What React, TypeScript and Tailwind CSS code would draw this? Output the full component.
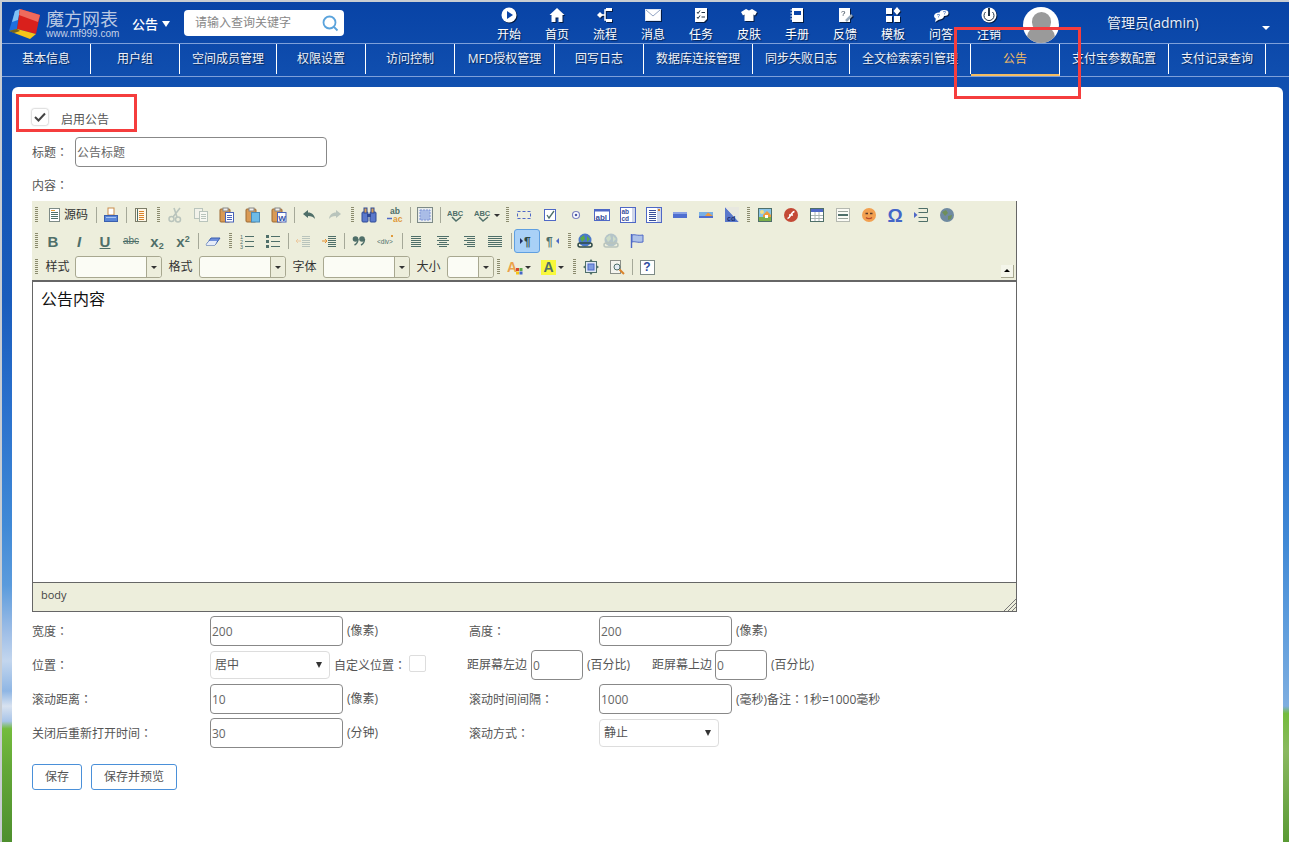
import type { ReactNode } from "react";

const slate = "#4f6f69";
const blue = "#4f68c6";
const faded = "#b9c4bc";

const navItems = [
  { label: "基本信息", w: "w-[89px]" },
  { label: "用户组", w: "w-[89px]" },
  { label: "空间成员管理", w: "w-[97px]" },
  { label: "权限设置", w: "w-[89px]" },
  { label: "访问控制", w: "w-[89px]" },
  { label: "MFD授权管理", w: "w-[100px]" },
  { label: "回写日志", w: "w-[89px]" },
  { label: "数据库连接管理", w: "w-[109px]" },
  { label: "同步失败日志", w: "w-[97px]" },
  { label: "全文检索索引管理", w: "w-[121px]" },
  { label: "公告", w: "w-[89px]", active: true },
  { label: "支付宝参数配置", w: "w-[109px]" },
  { label: "支付记录查询", w: "w-[97px]" },
];

function Ico({ children, w = 16 }: { children: ReactNode; w?: number }) {
  return (
    <svg width={w} height={16} viewBox={`0 0 ${w} 16`} fontFamily="Liberation Sans, sans-serif">
      {children}
    </svg>
  );
}

function Logo() {
  return (
    <svg width={33} height={32} viewBox="0 0 33 32" className="ml-[6px] mt-[6px] shrink-0">
      <polygon points="1,23 7,3 12,1 9,21" fill="#1d6fe0" />
      <polygon points="7,3 12,1 10,12 4,14" fill="#7fc0f5" />
      <polygon points="12,1 32,7 28,26 9,21" fill="#d9201c" />
      <polygon points="12,1 32,7 30,14 11,7" fill="#ee6a5c" />
      <polygon points="1,23 9,21 28,26 22,31" fill="#f5c518" />
      <polygon points="1,23 9,21 12,23 6,25" fill="#222" opacity="0.6" />
    </svg>
  );
}

// the reference's full-width colon sits mid-box, as in the TC font
function Colon() {
  return <span className="[font-family:'Noto_Sans_CJK_TC',sans-serif]">：</span>;
}

/* 顶部白色图标 */
const topIcons: Record<string, ReactNode> = {
  开始: (
    <>
      <circle cx="8" cy="8" r="7.5" fill="#fff" />
      <polygon points="6,4 12,8 6,12" fill="#0a45a8" />
    </>
  ),
  首页: <path d="M8 1 L15.5 8 H13.5 V15 H9.5 V10.5 H6.5 V15 H2.5 V8 H.5 Z" fill="#fff" />,
  流程: (
    <>
      <polygon points="0,8 3,5 6,8 3,11" fill="#fff" />
      <rect x="9" y="1" width="6" height="3" fill="#fff" />
      <rect x="9" y="12" width="6" height="3" fill="#fff" />
      <path d="M10 3 H8 V13 H10 M4 8 H8" stroke="#fff" strokeWidth="1.5" fill="none" />
    </>
  ),
  消息: (
    <>
      <rect x=".5" y="2.5" width="15" height="11" fill="#fff" stroke="#dfe6f2" />
      <path d="M1 3 L8 9 L15 3" stroke="#93a5c4" fill="none" />
    </>
  ),
  任务: (
    <>
      <path d="M2 1 H14 V12 L11 15 H2 Z" fill="#fff" />
      <path d="M4 5 L5 6.5 L7 3.5 M4 10 L5 11.5 L7 8.5" stroke="#234" fill="none" />
      <path d="M8.5 5.5 H12 M8.5 10 H12" stroke="#234" />
    </>
  ),
  皮肤: <path d="M5 2 L8 3.5 L11 2 L16 5 L14 8.5 L12.5 7.5 V14 H3.5 V7.5 L2 8.5 L0 5 Z" fill="#fff" />,
  手册: (
    <>
      <rect x="3" y="1" width="11" height="14" fill="#fff" />
      <rect x="5" y="4" width="7" height="4" fill="#0a45a8" />
      <path d="M3 3 H1.5 M3 6 H1.5 M3 9 H1.5 M3 12 H1.5" stroke="#fff" />
    </>
  ),
  反馈: (
    <>
      <rect x="2" y="1" width="11" height="14" fill="#fff" />
      <text x="4" y="9" fontSize="8" fill="#234">?</text>
      <path d="M9 14 L15 8" stroke="#9ab" strokeWidth="2.5" />
    </>
  ),
  模板: (
    <>
      <rect x="1" y="1" width="6" height="6" fill="#fff" />
      <rect x="1" y="9" width="6" height="6" fill="#fff" />
      <rect x="9" y="9" width="6" height="6" fill="#fff" />
      <polygon points="12,0 15.5,4 12,8 8.5,4" fill="#fff" />
    </>
  ),
  问答: (
    <>
      <ellipse cx="6" cy="9" rx="5" ry="3.5" fill="#fff" />
      <ellipse cx="11" cy="6" rx="4.5" ry="3" fill="#fff" />
      <polygon points="3,11 2,15 7,12" fill="#fff" />
      <text x="4" y="11" fontSize="5" fill="#0a45a8">?</text>
      <text x="10" y="8" fontSize="5" fill="#0a45a8">?</text>
    </>
  ),
  注销: (
    <>
      <circle cx="8" cy="8" r="7.5" fill="#fff" />
      <rect x="7" y="1" width="2" height="8" fill="#234" />
      <path d="M4.5 5 A5 5 0 1 0 11.5 5" stroke="#234" fill="none" />
    </>
  ),
};

function Grip({ w = "w-[8px]" }: { w?: string }) {
  return (
    <div className={`${w} h-[16px] flex justify-center shrink-0`}>
      <div className="w-[3px] h-[16px] bg-[repeating-linear-gradient(#8b8b6e_0_1px,transparent_1px_2px)]" />
    </div>
  );
}

function Sep({ w = "w-[4px]" }: { w?: string }) {
  return (
    <div className={`${w} h-[16px] flex justify-center shrink-0`}>
      <div className="w-[1px] h-[16px] bg-[#a5a898]" />
    </div>
  );
}

function Btn({ children, w = "w-[26px]" }: { children: ReactNode; w?: string }) {
  return <div className={`${w} h-[24px] flex items-center justify-center shrink-0`}>{children}</div>;
}

function Lines({ ys, x1 = 2, x2 = 14, c = slate }: { ys: number[]; x1?: number; x2?: number; c?: string }) {
  return (
    <>
      {ys.map((y) => (
        <path key={y} d={`M${x1} ${y}.5 H${x2}`} stroke={c} />
      ))}
    </>
  );
}

function Clip({ children }: { children: ReactNode }) {
  return (
    <Ico>
      <rect x="1" y="2" width="10" height="13" rx="1" fill="#d99a55" stroke="#9c6a35" />
      <rect x="4" y="1" width="5" height="3" fill="#eee" stroke="#888" />
      {children}
    </Ico>
  );
}

function Combo({ w }: { w: string }) {
  return (
    <div className={`${w} h-[22px] border border-[#a8a890] rounded-[3px] bg-[#fbfcf5] flex justify-end shrink-0`}>
      <div className="w-[15px] border-l border-[#a8a890] bg-[#edeedc] rounded-r-[3px] flex items-center justify-center">
        <div className="w-0 h-0 border-x-[3px] border-x-transparent border-t-[3px] border-t-[#333]" />
      </div>
    </div>
  );
}

function Caret() {
  return <div className="w-0 h-0 border-x-[3px] border-x-transparent border-t-[3px] border-t-[#333] ml-[2px]" />;
}

function Spell() {
  return (
    <Ico w={18}>
      <text x="0" y="9" fontSize="7.5" fontWeight="bold" fill={slate}>ABC</text>
      <path d="M5 10 L9 14 L14 10" stroke={slate} strokeWidth="1.5" fill="none" />
    </Ico>
  );
}

function ToolbarRow1() {
  return (
    <div className="flex items-center h-[26px]">
      <Grip />
      <Btn w="w-[54px]">
        <Ico>
          <rect x="3.5" y="1.5" width="10" height="13" fill="#fff" stroke="#7d8a86" />
          <Lines ys={[5, 7, 9, 11]} x1={5} x2={12} />
          <path d="M5 3.5 H9" stroke="#e09a3a" />
        </Ico>
        <span className="ml-[2px] text-[12px] text-[#333]">源码</span>
      </Btn>
      <Sep />
      <Btn>
        <Ico>
          <rect x="5" y="1" width="6" height="7" fill="#fff" stroke="#c98b4a" />
          <rect x="1.5" y="8.5" width="13" height="6" fill="#5a86d8" stroke="#3a5fae" />
          <path d="M3 10.5 H13" stroke="#a9c4f0" />
        </Ico>
      </Btn>
      <Sep />
      <Btn>
        <Ico>
          <rect x="2.5" y="1.5" width="11" height="13" fill="#fff8e8" stroke="#7d7d68" />
          <Lines ys={[4, 6, 8, 10, 12]} x1={6} x2={11} c="#d9822b" />
          <path d="M4.5 2 V14" stroke={slate} />
        </Ico>
      </Btn>
      <Grip />
      <Btn>
        <Ico>
          <path d="M13 1 L6 10 M7 1 L10 10" stroke={faded} strokeWidth="1.6" />
          <circle cx="4.5" cy="12" r="2.5" fill="none" stroke={faded} strokeWidth="1.5" />
          <circle cx="11" cy="12.5" r="2.5" fill="none" stroke={faded} strokeWidth="1.5" />
        </Ico>
      </Btn>
      <Btn>
        <Ico>
          <rect x="1.5" y="1.5" width="8" height="10" fill="#f2f2ea" stroke={faded} />
          <rect x="6.5" y="4.5" width="8" height="10" fill="#f8f8f2" stroke={faded} />
          <Lines ys={[7, 9, 11]} x1={8} x2={13} c={faded} />
        </Ico>
      </Btn>
      <Btn>
        <Clip>
          <rect x="6.5" y="5.5" width="8" height="9.5" fill="#fff" stroke="#4a63b8" />
          <Lines ys={[8, 10, 12]} x1={8} x2={13} c="#4a63b8" />
        </Clip>
      </Btn>
      <Btn>
        <Clip>
          <rect x="6.5" y="5.5" width="8" height="9.5" fill="#6dbbe8" stroke="#4a8ab8" />
        </Clip>
      </Btn>
      <Btn>
        <Clip>
          <rect x="6.5" y="5.5" width="8.5" height="9.5" fill="#fff" stroke="#4a63b8" />
          <text x="7.3" y="13.5" fontSize="8" fontWeight="bold" fill="#3350a8">W</text>
        </Clip>
      </Btn>
      <Sep />
      <Btn>
        <Ico>
          <path d="M2 7 L7 3 V5.5 C11 5.5 13.5 8 14 12 C12.5 10 10.5 9 7 9 V11 Z" fill={slate} />
        </Ico>
      </Btn>
      <Btn>
        <Ico>
          <path d="M14 7 L9 3 V5.5 C5 5.5 2.5 8 2 12 C3.5 10 5.5 9 9 9 V11 Z" fill={faded} />
        </Ico>
      </Btn>
      <Grip />
      <Btn>
        <Ico>
          <rect x="1" y="5" width="6" height="10" rx="1" fill="#5a78cc" stroke="#2f4a96" />
          <rect x="9" y="5" width="6" height="10" rx="1" fill="#5a78cc" stroke="#2f4a96" />
          <rect x="3" y="1" width="3" height="5" fill="#d9a15a" stroke="#2f4a96" />
          <rect x="10" y="1" width="3" height="5" fill="#d9a15a" stroke="#2f4a96" />
          <rect x="6" y="7" width="4" height="3" fill="#2f4a96" />
        </Ico>
      </Btn>
      <Btn>
        <Ico>
          <text x="3" y="7" fontSize="8.5" fontWeight="bold" fill={slate}>ab</text>
          <text x="6" y="15" fontSize="8.5" fontWeight="bold" fill="#e09a3a">ac</text>
          <path d="M0 11.5 H5" stroke={blue} strokeWidth="1.5" />
        </Ico>
      </Btn>
      <Sep />
      <Btn>
        <Ico>
          <rect x=".5" y=".5" width="15" height="15" fill="#e8ecec" stroke="#7d8a86" />
          <rect x="3" y="3" width="10" height="10" fill="#a9bce6" stroke="#7f94d6" strokeDasharray="2 1" />
        </Ico>
      </Btn>
      <Sep />
      <Btn w="w-[28px]">
        <Spell />
      </Btn>
      <Btn w="w-[33px]">
        <Spell />
        <Caret />
      </Btn>
      <Grip />
      <Btn>
        <Ico>
          <rect x="1.5" y="4.5" width="13" height="7" fill="none" stroke={blue} strokeDasharray="3 2" />
        </Ico>
      </Btn>
      <Btn>
        <Ico>
          <rect x="2.5" y="2.5" width="11" height="11" fill="#fff" stroke={blue} />
          <path d="M5 8 L7 11 L12 4" stroke={slate} strokeWidth="1.3" fill="none" />
        </Ico>
      </Btn>
      <Btn>
        <Ico>
          <circle cx="8" cy="8" r="3.5" fill="#fff" stroke="#7d82c0" strokeWidth="1.2" />
          <circle cx="8" cy="8" r="1.3" fill="#4b5aa8" />
        </Ico>
      </Btn>
      <Btn>
        <Ico>
          <rect x=".5" y="2.5" width="15" height="11" fill="#fff" stroke={blue} />
          <rect x=".5" y="2.5" width="15" height="2" fill={blue} />
          <text x="1.5" y="12.5" fontSize="8" fontWeight="bold" fill="#3a4f9a">abl</text>
        </Ico>
      </Btn>
      <Btn>
        <Ico>
          <rect x=".5" y=".5" width="15" height="15" fill="#fff" stroke={blue} />
          <text x="1.5" y="7" fontSize="6.5" fontWeight="bold" fill="#3a4f9a">ab</text>
          <text x="1.5" y="14" fontSize="6.5" fontWeight="bold" fill="#3a4f9a">cd</text>
          <rect x="12" y="1" width="3" height="14" fill="#cfd6ea" />
        </Ico>
      </Btn>
      <Btn>
        <Ico>
          <rect x=".5" y=".5" width="15" height="15" fill="#fff" stroke={blue} />
          <Lines ys={[3, 5, 7, 9, 11, 13]} x1={3} x2={10} c="#3a4f9a" />
          <rect x="11" y="1" width="4" height="14" fill="#cfd6ea" />
          <rect x="12" y="2" width="2" height="2" fill="#d9822b" />
        </Ico>
      </Btn>
      <Btn>
        <Ico>
          <rect x="1" y="5" width="14" height="6" fill="#4f6fd0" />
          <rect x="1" y="5" width="14" height="2" fill="#8aa2e4" />
        </Ico>
      </Btn>
      <Btn>
        <Ico>
          <rect x="1" y="5" width="14" height="6" fill="#7ab0e4" />
          <path d="M7 9 L10 5.5 L15 9 V11 H7 Z" fill="#ee9b3e" />
          <rect x="1" y="9" width="14" height="2" fill="#4f6fd0" />
        </Ico>
      </Btn>
      <Btn>
        <Ico>
          <polygon points="1,0 15,15 1,15" fill="#5a78cc" />
          <polygon points="1,0 15,0 15,15" fill="#e8e8e0" />
          <text x="3" y="14" fontSize="7" fontWeight="bold" fill="#1c2f70">cd</text>
        </Ico>
      </Btn>
      <Grip w="w-[7px]" />
      <Btn>
        <Ico>
          <rect x="1.5" y="1.5" width="13" height="13" fill="#8ac4e8" stroke={slate} />
          <circle cx="5" cy="5" r="2" fill="#f3e08a" />
          <path d="M6 8 L10 4 L14 8 V10 H6 Z" fill="#ee9b3e" />
          <rect x="2" y="10" width="12" height="4" fill="#7cb04a" />
          <rect x="8" y="8" width="3" height="3" fill="#fff" />
        </Ico>
      </Btn>
      <Btn>
        <Ico>
          <circle cx="8" cy="8" r="7" fill="#c44a36" />
          <path d="M4.5 11.5 C8 11 7.5 5 11.5 4.5 M6 8 H10" stroke="#fff" strokeWidth="1.5" fill="none" />
        </Ico>
      </Btn>
      <Btn>
        <Ico>
          <rect x="1.5" y="1.5" width="13" height="13" fill="#fff" stroke={slate} />
          <rect x="2" y="2" width="12" height="3" fill={blue} />
          <path d="M2 8.5 H14 M2 11.5 H14 M6 5 V14 M10 5 V14" stroke="#aab4b4" />
        </Ico>
      </Btn>
      <Btn>
        <Ico>
          <rect x="1.5" y="1.5" width="13" height="13" fill="#fbfbf5" stroke="#b4b8b0" />
          <rect x="3" y="7" width="10" height="2" fill={slate} />
          <path d="M3 4.5 H13 M3 11.5 H13" stroke="#9aa49c" />
        </Ico>
      </Btn>
      <Btn>
        <Ico>
          <circle cx="8" cy="8" r="7" fill="#f2a050" />
          <path d="M4.5 6.5 H7 M9 6.5 H11.5" stroke="#5a3a2a" strokeWidth="1.3" />
          <path d="M5 10.5 C6.5 12 9.5 12 11 10.5" stroke="#b84a2a" strokeWidth="1.3" fill="none" />
        </Ico>
      </Btn>
      <Btn>
        <span className="text-[19px] leading-none font-bold text-[#4466c8] [font-family:'Liberation_Sans',sans-serif]">Ω</span>
      </Btn>
      <Btn>
        <Ico>
          <path d="M5.5 1.5 H14.5 V5.5 H5.5 M5.5 10.5 H14.5 V14.5 H5.5" fill="none" stroke={slate} />
          <polygon points="1,5 4.5,8 1,11" fill={blue} />
        </Ico>
      </Btn>
      <Btn>
        <Ico>
          <circle cx="8" cy="8" r="7" fill="#6f8aa0" />
          <path d="M3 5 L7 3 L9 6 L6 9 Z M9 9 L13 8 L12 12 L9 13 Z" fill="#6f8f5a" />
        </Ico>
      </Btn>
    </div>
  );
}

function ToolbarRow2() {
  const letter = "text-[15px] leading-none text-[#4f6f69] [font-family:'Liberation_Sans',sans-serif]";
  return (
    <div className="flex items-center h-[26px]">
      <Grip />
      <Btn>
        <span className={`${letter} font-bold`}>B</span>
      </Btn>
      <Btn>
        <span className={`${letter} font-bold italic`}>I</span>
      </Btn>
      <Btn>
        <span className={`${letter} font-bold underline`}>U</span>
      </Btn>
      <Btn>
        <span className="text-[10px] leading-none text-[#4f6f69] line-through [font-family:'Liberation_Sans',sans-serif]">abc</span>
      </Btn>
      <Btn>
        <span className={`${letter} font-bold`}>
          x<sub className="text-[9px]">2</sub>
        </span>
      </Btn>
      <Btn>
        <span className={`${letter} font-bold`}>
          x<sup className="text-[9px]">2</sup>
        </span>
      </Btn>
      <Sep />
      <Btn>
        <Ico>
          <polygon points="1,12 6,5 15,5 10,12" fill="#6f8fdc" stroke="#3a5fae" />
          <polygon points="1,12 4,8 12,8 10,12" fill="#e6ecf8" />
        </Ico>
      </Btn>
      <Grip />
      <Btn>
        <Ico>
          <text x="1" y="6" fontSize="5.5" fill={slate}>1</text>
          <text x="1" y="11" fontSize="5.5" fill={slate}>2</text>
          <text x="1" y="16" fontSize="5.5" fill={slate}>3</text>
          <Lines ys={[3, 8, 13]} x1={6} x2={15} />
        </Ico>
      </Btn>
      <Btn>
        <Ico>
          <rect x="1" y="2" width="3" height="3" fill={slate} />
          <rect x="1" y="7" width="3" height="3" fill={slate} />
          <rect x="1" y="12" width="3" height="3" fill={slate} />
          <Lines ys={[3, 8, 13]} x1={6} x2={15} />
        </Ico>
      </Btn>
      <Sep />
      <Btn>
        <Ico>
          <Lines ys={[3, 5, 7, 9, 11, 13]} x1={7} x2={15} c={faded} />
          <path d="M6 8 H1 M3 6 L1 8 L3 10" stroke="#ecc9a0" fill="none" />
        </Ico>
      </Btn>
      <Btn>
        <Ico>
          <Lines ys={[3, 5, 7, 9, 11, 13]} x1={7} x2={15} />
          <path d="M1 8 H6 M4 6 L6 8 L4 10" stroke="#e6902e" fill="none" />
        </Ico>
      </Btn>
      <Sep />
      <Btn>
        <Ico>
          <circle cx="4.5" cy="6" r="2.8" fill={slate} />
          <circle cx="11" cy="6" r="2.8" fill={slate} />
          <path d="M7 6 C7 9 5.5 11 3.5 12 M13.5 6 C13.5 9 12 11 10 12" stroke={slate} strokeWidth="1.4" fill="none" />
        </Ico>
      </Btn>
      <Btn w="w-[28px]">
        <Ico w={18}>
          <text x="0" y="11" fontSize="6.5" fill={slate}>{"<div>"}</text>
          <path d="M14 2 L16 4 M16 2 L14 4" stroke="#e09a3a" />
        </Ico>
      </Btn>
      <Sep />
      <Btn>
        <Ico>
          <Lines ys={[3, 5, 7, 9, 11, 13]} x1={2} x2={12} />
        </Ico>
      </Btn>
      <Btn>
        <Ico>
          <Lines ys={[3, 7, 11]} x1={2} x2={14} />
          <Lines ys={[5, 9, 13]} x1={4} x2={12} />
        </Ico>
      </Btn>
      <Btn>
        <Ico>
          <Lines ys={[3, 7, 11]} x1={3} x2={14} />
          <Lines ys={[5, 9, 13]} x1={6} x2={14} />
        </Ico>
      </Btn>
      <Btn>
        <Ico>
          <Lines ys={[3, 5, 7, 9, 11, 13]} x1={1} x2={15} />
        </Ico>
      </Btn>
      <Sep w="w-[6px]" />
      <div className="w-[26px] h-[24px] rounded-[3px] border border-[#5f9fe0] bg-[#a9d1f7] flex items-center justify-center shrink-0">
        <Ico>
          <polygon points="1,5 4,8 1,11" fill="#1f2f66" />
          <text x="5" y="13" fontSize="12" fontWeight="bold" fill="#2f4a46">¶</text>
        </Ico>
      </div>
      <Btn>
        <Ico>
          <text x="1" y="13" fontSize="12" fontWeight="bold" fill={slate}>¶</text>
          <polygon points="14,5 11,8 14,11" fill={blue} />
        </Ico>
      </Btn>
      <Grip w="w-[6px]" />
      <Btn>
        <Ico>
          <circle cx="8" cy="7" r="6.5" fill="#4a78c8" />
          <path d="M3 5 L7 2 L8 6 L5 9 Z M10 3 L13 6 L10 9 Z" fill="#5aa84a" />
          <rect x="1" y="10" width="14" height="4" rx="2" fill="none" stroke="#2f4a46" strokeWidth="1.5" />
        </Ico>
      </Btn>
      <Btn>
        <Ico>
          <circle cx="8" cy="7" r="6.5" fill="#b4c4c8" />
          <path d="M3 5 L7 2 L8 6 L5 9 Z M10 3 L13 6 L10 9 Z" fill="#cddcc8" />
          <rect x="1" y="10" width="14" height="4" rx="2" fill="none" stroke={faded} strokeWidth="1.5" />
        </Ico>
      </Btn>
      <Btn>
        <Ico>
          <path d="M2.5 1 V15" stroke={blue} strokeWidth="1.4" />
          <path d="M3 2 C6 1 8 3 14 2 V9 C8 10 6 8 3 9 Z" fill="#aec2e8" stroke={blue} />
        </Ico>
      </Btn>
    </div>
  );
}

function ToolbarRow3() {
  const label = "text-[12px] text-[#333] text-center shrink-0";
  return (
    <div className="flex items-center h-[26px]">
      <Grip />
      <span className={`${label} w-[35px]`}>样式</span>
      <Combo w="w-[87px]" />
      <span className={`${label} w-[37px]`}>格式</span>
      <Combo w="w-[87px]" />
      <span className={`${label} w-[37px]`}>字体</span>
      <Combo w="w-[87px]" />
      <span className={`${label} w-[37px]`}>大小</span>
      <Combo w="w-[47px]" />
      <Grip />
      <Btn w="w-[33px]">
        <Ico>
          <text x="0" y="13" fontSize="14" fontWeight="bold" fill="#eba24a">A</text>
          <rect x="9" y="9" width="3" height="3" fill="#d8452e" />
          <rect x="12.5" y="9" width="3" height="3" fill="#5aa84a" />
          <rect x="9" y="12.5" width="3" height="3" fill="#f5c518" />
          <rect x="12.5" y="12.5" width="3" height="3" fill="#4466c8" />
        </Ico>
        <Caret />
      </Btn>
      <Btn w="w-[35px]">
        <div className="w-[15px] h-[15px] bg-[#f8f83c] text-[14px] leading-[15px] font-bold text-[#4f6f69] text-center [font-family:'Liberation_Sans',sans-serif]">A</div>
        <Caret />
      </Btn>
      <Grip />
      <Btn>
        <Ico>
          <rect x="2.5" y="2.5" width="11" height="11" fill="#dfe6f4" stroke={slate} />
          <rect x="5" y="5" width="6" height="6" fill="#7f9ce0" stroke={blue} />
          <path d="M8 0 L6.5 2 H9.5 Z M8 16 L6.5 14 H9.5 Z M0 8 L2 6.5 V9.5 Z M16 8 L14 6.5 V9.5 Z" fill={slate} />
        </Ico>
      </Btn>
      <Btn>
        <Ico>
          <rect x="1.5" y="1.5" width="10" height="13" fill="#f4f4ee" stroke="#8a8f88" />
          <circle cx="8" cy="8" r="3" fill="#e4ecf4" stroke={slate} />
          <path d="M10.5 10.5 L15 15" stroke="#d9822b" strokeWidth="2" />
        </Ico>
      </Btn>
      <Sep />
      <Btn>
        <div className="w-[15px] h-[15px] border border-[#7d8a86] bg-white text-[12px] leading-[13px] font-bold text-[#2f4aa0] text-center [font-family:'Liberation_Sans',sans-serif]">?</div>
      </Btn>
      <div className="ml-auto mr-[2px] mt-[8px] w-[13px] h-[13px] border-r border-b border-[#a8a890] bg-[#f4f5ea] flex items-center justify-center">
        <div className="w-0 h-0 border-x-[3px] border-x-transparent border-b-[3px] border-b-black" />
      </div>
    </div>
  );
}

function Editor() {
  return (
    <div className="w-[985px] mt-[8px] shrink-0">
      <div className="h-[79px] bg-[#edeedc] pt-[1px] border-r border-[#666]">
        <ToolbarRow1 />
        <ToolbarRow2 />
        <ToolbarRow3 />
      </div>
      <div className="h-[303px] bg-white border-x border-t-2 border-b border-[#666] pl-[8px] pt-[6px] text-[16px] leading-[22px] text-[#111]">
        公告内容
      </div>
      <div className="h-[29px] bg-[#edeedc] border-x border-b border-[#666] flex justify-between">
        <span className="pl-[8px] pt-[4px] text-[11px] leading-[16px] text-[#444]">body</span>
        <svg width={13} height={13} viewBox="0 0 13 13" className="self-end">
          <path d="M13 1 L1 13 M13 5 L5 13 M13 9 L9 13" stroke="#777" />
        </svg>
      </div>
    </div>
  );
}

function TextBox({ value, w = "w-[133px]" }: { value: string; w?: string }) {
  return (
    <input
      readOnly
      defaultValue={value}
      className={`${w} h-[30px] shrink-0 border border-[#888] rounded-[4px] pl-[1px] text-[12px] text-[#666] outline-none bg-white`}
    />
  );
}

function FakeSelect({ value, w, h }: { value: string; w: string; h: string }) {
  return (
    <div className={`${w} ${h} shrink-0 border border-[#ddd] rounded-[4px] pl-[4px] pr-[7px] flex items-center justify-between text-[12px] text-[#555] bg-white`}>
      <span>{value}</span>
      <div className="w-0 h-0 border-x-[3.5px] border-x-transparent border-t-[6px] border-t-[#333]" />
    </div>
  );
}

function Row({ children }: { children: ReactNode }) {
  return <div className="flex items-center h-[30px] mt-[4px] text-[12px] text-[#555]">{children}</div>;
}

export default function App() {
  return (
    <div className="relative w-full h-[842px] overflow-hidden flex flex-col border-l-2 border-t-2 border-[#c9cdd2] [font-family:'Open_Sans','Noto_Sans_CJK_SC',sans-serif]">
      {/* 顶栏 + 导航 */}
      <div className="shrink-0 bg-[linear-gradient(#0843a6,#1150b0)]">
        <header className="h-[42px] flex items-start border-b border-[#7ea0da]">
          <Logo />
          <div className="ml-[5px] mt-[7px] w-[72px] shrink-0">
            <div className="text-[18px] leading-[20px] text-[#b9c8e2]">魔方网表</div>
            <div className="text-[10px] leading-[10px] text-[#c4d0e6] [font-family:'Liberation_Sans',sans-serif]">www.mf999.com</div>
          </div>
          <div className="ml-[14px] mt-[14px] flex items-center gap-[4px] text-[13px] leading-[16px] font-medium text-white shrink-0 w-[38px]">
            <span className="whitespace-nowrap">公告</span>
            <div className="w-0 h-0 shrink-0 border-x-[4px] border-x-transparent border-t-[6px] border-t-white" />
          </div>
          <div className="ml-[14px] mt-[8px] w-[160px] h-[26px] bg-white rounded-[4px] pl-[11px] pr-[5px] flex items-center justify-between shrink-0">
            <span className="text-[12px] text-[#888]">请输入查询关键字</span>
            <svg width={17} height={17} viewBox="0 0 17 17">
              <circle cx="7.5" cy="7.5" r="6" fill="none" stroke="#5aa3dc" strokeWidth="1.8" />
              <path d="M12 12 L15.5 15.5" stroke="#5aa3dc" strokeWidth="1.8" />
            </svg>
          </div>
          <div className="ml-[141px] flex shrink-0">
            {Object.entries(topIcons).map(([label, icon]) => (
              <div key={label} className="w-[48px] flex flex-col items-center pt-[5px]">
                <svg width={16} height={16} viewBox="0 0 16 16" className="drop-shadow-[1px_1px_0_rgba(0,0,0,0.6)]" fontFamily="Liberation Sans, sans-serif">
                  {icon}
                </svg>
                <span className="mt-[4px] text-[12px] leading-[16px] text-white [text-shadow:1px_1px_1px_rgba(0,0,0,0.5)]">{label}</span>
              </div>
            ))}
          </div>
          <div className="ml-[10px] mt-[5px] w-[36px] h-[36px] rounded-full bg-white overflow-hidden shrink-0 flex flex-col items-center">
            <div className="mt-[5px] w-[19px] h-[22px] rounded-full bg-[#9a9a9a]" />
            <div className="-mt-[5px] w-[28px] h-[16px] rounded-t-[10px] bg-[#9a9a9a] shrink-0" />
          </div>
          <div className="ml-[48px] mt-[11px] text-[14px] leading-[20px] text-[#e8eef8] shrink-0 [text-shadow:1px_1px_1px_rgba(0,0,0,0.4)]">
            管理员(admin)
          </div>
          <div className="ml-[63px] mt-[24px] w-0 h-0 border-x-[4px] border-x-transparent border-t-[4px] border-t-white shrink-0" />
        </header>

        <nav className="h-[33px] flex items-start border-b border-[#7ea0da]">
          {navItems.map((item) => (
            <div
              key={item.label}
              className={
                item.active
                  ? `${item.w} h-[32px] shrink-0 flex items-center justify-center border-r border-white border-b-2 border-b-[#f5bd63] text-[12px] text-[#f5bd63]`
                  : `${item.w} h-[30px] shrink-0 flex items-center justify-center border-r border-white text-[12px] whitespace-nowrap text-[#eef2fa] [text-shadow:1px_1px_1px_rgba(0,0,0,0.5)]`
              }
            >
              {item.label}
            </div>
          ))}
        </nav>
        <div className="h-[10px]" />
      </div>

      {/* 主体 */}
      <div className="flex-1 flex min-h-0 bg-[#1150b0]">
        <div className="w-[10px] shrink-0 bg-[linear-gradient(#1150b0_0%,#1a5cbc_28%,#2a70cc_42%,#4089d6_58%,#5b9bdc_66%,#9dbde6_72%,#c3d6ee_76%,#8fb6e4_80%,#d8e2f0_82%,#a8c4e8_84%,#74bc3c_85%,#64a838_90%,#4e8f2e_100%)]" />
        <main className="flex-1 min-w-0 bg-white rounded-t-[6px] pl-[20px] pt-[22px] flex flex-col">
          <div className="flex items-start h-[16px]">
            <div className="w-[16px] h-[16px] rounded-[2px] bg-white shadow-[0_0_2px_rgba(0,0,0,0.45)] flex items-center justify-center">
              <svg width={12} height={10} viewBox="0 0 12 10">
                <path d="M1 5 L4.5 8.5 L11 1.5" stroke="#444" strokeWidth="2" fill="none" />
              </svg>
            </div>
            <span className="ml-[13px] mt-[2px] text-[12px] leading-[17px] text-[#555]">启用公告</span>
          </div>

          <div className="mt-[12px] flex items-center">
            <span className="w-[43px] text-[12px] text-[#555]">标题<Colon /></span>
            <TextBox value="公告标题" w="w-[252px]" />
          </div>
          <div className="mt-[10px] h-[16px] text-[12px] leading-[16px] text-[#555]">内容<Colon /></div>

          <Editor />

          <Row>
            <div className="w-[437px] flex items-center shrink-0">
              <span className="w-[178px]">宽度<Colon /></span>
              <TextBox value="200" />
              <span className="ml-[4px]">(像素)</span>
            </div>
            <span className="w-[130px]">高度<Colon /></span>
            <TextBox value="200" />
            <span className="ml-[4px]">(像素)</span>
          </Row>
          <Row>
            <div className="w-[435px] flex items-center shrink-0">
              <span className="w-[178px]">位置<Colon /></span>
              <FakeSelect value="居中" w="w-[120px]" h="h-[28px]" />
              <span className="ml-[4px] w-[75px]">自定义位置<Colon /></span>
              <div className="w-[17px] h-[17px] rounded-[2px] border border-[#ddd] bg-white -mt-[4px]" />
            </div>
            <span className="w-[60px] whitespace-nowrap">距屏幕左边</span>
            <TextBox value="0" w="ml-[4px] w-[52px]" />
            <span className="ml-[4px] w-[65px]">(百分比)</span>
            <span className="w-[60px] whitespace-nowrap">距屏幕上边</span>
            <TextBox value="0" w="ml-[3px] w-[52px]" />
            <span className="ml-[4px]">(百分比)</span>
          </Row>
          <Row>
            <div className="w-[437px] flex items-center shrink-0">
              <span className="w-[178px]">滚动距离<Colon /></span>
              <TextBox value="10" />
              <span className="ml-[4px]">(像素)</span>
            </div>
            <span className="w-[130px]">滚动时间间隔<Colon /></span>
            <TextBox value="1000" />
            <span className="ml-[4px]">(毫秒)备注<Colon />1秒=1000毫秒</span>
          </Row>
          <Row>
            <div className="w-[437px] flex items-center shrink-0">
              <span className="w-[178px]">关闭后重新打开时间<Colon /></span>
              <TextBox value="30" />
              <span className="ml-[4px]">(分钟)</span>
            </div>
            <span className="w-[130px]">滚动方式<Colon /></span>
            <FakeSelect value="静止" w="w-[120px]" h="h-[28px]" />
          </Row>

          <div className="mt-[16px] flex gap-[9px] text-[12px] text-[#555]">
            <button className="w-[50px] h-[26px] border border-[#4a90d9] rounded-[3px] bg-white">保存</button>
            <button className="w-[86px] h-[26px] border border-[#4a90d9] rounded-[3px] bg-white">保存并预览</button>
          </div>
        </main>
        <div className="w-[6px] shrink-0 bg-[linear-gradient(#1150b0_0%,#1a5cbc_28%,#2a70cc_45%,#4089d6_60%,#5b9bdc_70%,#7eaee0_82%,#74bc3c_83%,#8ab860_88%,#5a9a34_100%)]" />
      </div>

      {/* 标注红框 */}
      <div className="absolute left-[14px] top-[92px] w-[121px] h-[38px] border-[3px] border-[#f53d3d] pointer-events-none" />
      <div className="absolute left-[952px] top-[25px] w-[127px] h-[72px] border-[3px] border-[#f53d3d] pointer-events-none" />
    </div>
  );
}
